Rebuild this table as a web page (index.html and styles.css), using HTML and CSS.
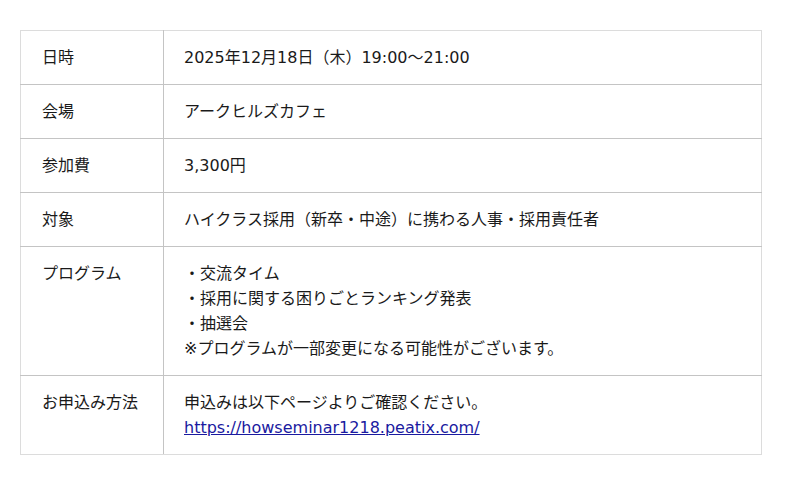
FILE: index.html
```html
<!DOCTYPE html>
<html lang="ja">
<head>
<meta charset="utf-8">
<link rel="stylesheet" href="styles.css">
</head>
<body>
<table class="info">
  <tr><th>日時</th><td>2025年12月18日（木）19:00〜21:00</td></tr>
  <tr><th>会場</th><td>アークヒルズカフェ</td></tr>
  <tr><th>参加費</th><td>3,300円</td></tr>
  <tr><th>対象</th><td>ハイクラス採用（新卒・中途）に携わる人事・採用責任者</td></tr>
  <tr><th>プログラム</th><td>・交流タイム<br>・採用に関する困りごとランキング発表<br>・抽選会<br>※プログラムが一部変更になる可能性がございます。</td></tr>
  <tr><th>お申込み方法</th><td>申込みは以下ページよりご確認ください。<br><a class="link" href="#">https://howseminar1218.peatix.com/</a></td></tr>
</table>
</body>
</html>
```
FILE: styles.css
```css
html, body {
  margin: 0;
  padding: 0;
  background: #ffffff;
}
body {
  padding: 30px 38px 0 20px;
  font-family: "DejaVu Sans", "Noto Sans CJK JP", sans-serif;
  font-size: 16px;
  color: #1a1a1a;
}
.info {
  width: 742px;
  border-collapse: collapse;
  border: 1px solid #dcdcdc;
}
.info th,
.info td {
  border: 1px solid #c4c4c4;
  padding: 14px 20px 14px 21px;
  line-height: 25px;
  text-align: left;
  vertical-align: top;
  font-weight: normal;
}
.info td { padding-left: 20px; }
.info tr:first-child th,
.info tr:first-child td { border-top-color: #dcdcdc; }
.info tr:last-child th,
.info tr:last-child td { border-bottom-color: #dcdcdc; }
.info td { border-right-color: #dcdcdc; }
.info th { border-left-color: #dcdcdc; width: 101px; }
.link {
  color: #1a1aa0;
  text-decoration: underline;
}
```
